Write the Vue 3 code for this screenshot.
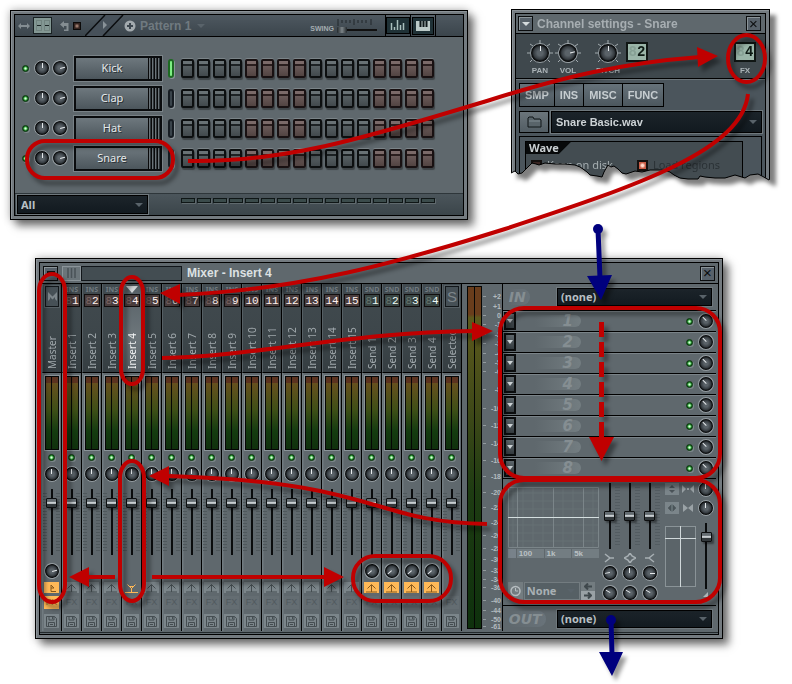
<script setup>
import { reactive, ref } from 'vue'

const channels = reactive(['Kick', 'Clap', 'Hat', 'Snare'].map((name, i) => ({ name, on: true, active: i === 0 })))

const strips = [
  { name: 'Master', kind: 'master' },
  ...Array.from({ length: 15 }, (_, i) => ({ name: `Insert ${i + 1}`, kind: 'ins', no: i + 1, current: i === 3 })),
  ...Array.from({ length: 4 }, (_, i) => ({ name: `Send ${i + 1}`, kind: 'snd', no: i + 1 })),
  { name: 'Selected', kind: 'sel' },
]

const scale = [
  ['+2', 12], ['+1', 22], ['0', 31], ['-1', 40], ['-2', 50], ['-3', 59], ['-4', 69], ['-5', 78], ['-6', 87],
  ['-8', 105], ['-10', 124], ['-12', 141], ['-14', 159], ['-16', 176], ['-18', 192], ['-20', 208], ['-22', 223],
  ['-24', 238], ['-26', 251], ['-28', 264], ['-30', 275], ['-32', 286], ['-34', 295], ['-36', 303], ['-40', 316],
  ['-44', 326], ['-50', 335], ['-61', 342],
]

const bands = [
  { icon: 'M1 1L6 5L1 9M6 5H10', a: '-100deg', b: '-60deg' },
  { icon: 'M6 0L8 3L12 5L8 7L6 10L4 7L0 5L4 3Z', a: '0deg', b: '-60deg' },
  { icon: 'M10 1L5 5L10 9M5 5H1', a: '90deg', b: '-60deg' },
]

const tabs = ['SMP', 'INS', 'MISC', 'FUNC']
const filter = ref('all')
const isSend = (s) => s.kind === 'snd'
const digits = (n) => (n > 9 ? ['', String(n)] : ['8', String(n)])
</script>

<template>
  <main class="desk">
    <section class="win rack" aria-label="Step sequencer">
      <div class="inner">
        <header class="rack-head">
          <svg class="gly arrows" width="12" height="8" viewBox="0 0 12 8"><path d="M0 4L3 1V3H9V1L12 4L9 7V5H3V7Z" /></svg>
          <button class="toggle" aria-label="Step view"><i></i><i></i></button>
          <svg class="gly undo" width="9" height="10" viewBox="0 0 9 10"><path d="M0 3.500L4 0V2H8.500V10H4V8.500H6.500V5H4V7Z" /></svg>
          <i class="lamp"></i>
          <svg class="slashes" width="40" height="21" viewBox="0 0 40 21">
            <path d="M1 21L21 0H38L18 21Z" fill="#47515a" />
            <path d="M0 21L20 0M18 21L38 0" stroke="#0b0d0f" stroke-width="1.500" fill="none" />
            <path d="M18 6L22 10L18 14Z" fill="#899298" />
          </svg>
          <svg class="plus" width="12" height="12" viewBox="0 0 12 12"><circle cx="6" cy="6" r="5.500" fill="#a3aaae" /><path d="M6 3V9M3 6H9" stroke="#3c464e" stroke-width="2" /></svg>
          <button class="pattern">Pattern 1 <i class="caret"></i></button>
          <label class="swing">SWING
            <span>
              <svg width="36" height="9" viewBox="0 0 36 9"><path d="M1 1V8M5 2V5M9 2V5M13 2V5M17 1V7M21 2V5M25 2V5M29 2V5M34 1V7" stroke="#20272b" /></svg>
              <input type="range" value="0" />
            </span>
          </label>
          <button class="view" aria-label="Graph editor"><svg width="16" height="11" viewBox="0 0 16 11"><path d="M1.500 3V10M4.500 7V10M7.500 0V10M10.500 5V10M13.500 3V10" stroke="#a9bfbd" stroke-width="1.500" /></svg></button>
          <button class="view" aria-label="Keyboard editor"><svg width="14" height="12" viewBox="0 0 14 12"><rect y="1" width="14" height="10" fill="#bccac8" /><path d="M4.500 1V7M7.500 1V7M10.500 1V7" stroke="#0d1718" stroke-width="2" /></svg></button>
          <i class="head-end"></i>
        </header>
        <div class="rows">
          <div v-for="c in channels" :key="c.name" class="row">
            <input v-model="c.on" class="led" type="checkbox" :aria-label="c.name + ' on'" />
            <input class="knob" type="range" :aria-label="c.name + ' pan'" />
            <input class="knob right" type="range" :aria-label="c.name + ' volume'" />
            <button class="channel"><span>{{ c.name }}</span></button>
            <i class="pill" :class="{ lit: c.active }"></i>
            <div class="steps">
              <button v-for="n in 16" :key="n" class="step" :class="{ warm: (n - 1) % 8 > 3 }" :aria-label="c.name + ' step ' + n"></button>
            </div>
          </div>
        </div>
        <footer class="rack-foot">
          <span class="select">
            <select v-model="filter" aria-label="Channel filter"><option value="all">All</option></select>
          </span>
          <div class="ticks"><i v-for="n in 16" :key="n"></i></div>
        </footer>
      </div>
    </section>

    <section class="torn" aria-label="Channel settings">
      <div class="win sheet">
        <div class="inner">
          <header class="title">
            <button class="sq" aria-label="Menu"><svg width="10" height="6" viewBox="0 0 10 6"><path d="M1 1H9L5 5Z" fill="#d4dadd" /></svg></button>
            <h2>Channel settings - Snare</h2>
            <button class="sq" aria-label="Close settings">×</button>
          </header>
          <div class="dials">
            <label class="dial">
              <input class="knob big" type="range" /><b>PAN</b>
              <svg class="rays" width="28" height="24" viewBox="0 0 28 24"><path d="M14 0V4M4 4L7 6M24 4L21 6M1 13H4M27 13H24M4 22L6 20M24 22L22 20" /></svg>
            </label>
            <label class="dial">
              <input class="knob big right" type="range" /><b>VOL</b>
              <svg class="rays" width="28" height="24" viewBox="0 0 28 24"><path d="M14 0V4M4 4L7 6M24 4L21 6M1 13H4M27 13H24M4 22L6 20M24 22L22 20" /></svg>
            </label>
            <label class="dial pitch">
              <input class="knob big" type="range" /><b>PITCH</b>
              <svg class="rays" width="28" height="24" viewBox="0 0 28 24"><path d="M14 0V4M4 4L7 6M24 4L21 6M1 13H4M27 13H24M4 22L6 20M24 22L22 20" /></svg>
            </label>
            <span class="lcd"><i>8</i>2</span>
            <div class="fx"><span class="lcd"><i>8</i>4</span><b>FX</b></div>
          </div>
          <div class="lower">
            <nav class="tabs"><button v-for="t in tabs" :key="t">{{ t }}</button></nav>
            <div class="file">
              <button aria-label="Browse"><svg width="15" height="12" viewBox="0 0 15 12"><path d="M1 11V2L2 1H6L7 3H13L14 4V11Z" fill="#59646a" stroke="#111719" /><path d="M2 5H13" stroke="#808b91" /></svg></button>
              <span class="select wide"><select aria-label="Sample"><option>Snare Basic.wav</option></select></span>
            </div>
            <div class="wave-outer">
              <fieldset class="wave">
                <legend>Wave</legend>
                <div class="checks">
                  <label><input type="checkbox" />Keep on disk</label>
                  <label class="dim"><input type="checkbox" checked />Load regions</label>
                </div>
              </fieldset>
            </div>
          </div>
        </div>
      </div>
      <svg class="edge" width="259" height="172" viewBox="0 0 259 172">
        <path d="M0 164L4 162L7 165L11 164L14 161L17 158L21 154L25 155L28 156L34 154L44 155L54 155L64 156L69 158L72 160L76 163L79 166L86 167L91 168L93 163L97 156L100 158L103 157L107 160L111 164L115 165L124 162L131 163L139 161L151 161L159 163L163 166L169 169L177 170L187 170L189 167L194 168L204 169L214 169L224 166L234 169L239 166L247 165L251 167L258 171" />
      </svg>
    </section>

    <section class="win mixer" aria-label="Mixer">
      <div class="inner">
        <header class="title">
          <button class="sq" aria-label="Mixer menu"><svg width="10" height="6" viewBox="0 0 10 6"><path d="M1 2H9" stroke="#111" stroke-width="2" /></svg></button>
          <button class="grip" aria-label="Layout"><svg width="9" height="10" viewBox="0 0 9 10"><path d="M1 0V10M4.500 0V10M8 0V10" stroke="#495257" stroke-width="1.500" /></svg></button>
          <i class="hint"></i>
          <h2>Mixer - Insert 4</h2>
          <button class="sq" aria-label="Close mixer">×</button>
        </header>
        <div class="mix">
          <div class="strips">
            <article v-for="s in strips" :key="s.name" class="strip" :class="{ current: s.current }">
              <div class="cap">
                <template v-if="s.no">
                  <svg v-if="s.current" class="point" width="12" height="8" viewBox="0 0 12 8"><path d="M0 1H12L6 8Z" fill="#d5d9db" /></svg>
                  <b v-else class="kind">{{ isSend(s) ? 'SND' : 'INS' }}</b>
                  <span class="num" :class="{ cool: isSend(s) }"><i>{{ digits(s.no)[0] }}</i>{{ digits(s.no)[1] }}</span>
                </template>
                <span v-else class="badge">
                  <svg v-if="s.kind === 'master'" width="9" height="9" viewBox="0 0 9 9"><path d="M0 9V0L4.500 4.500L9 0V9L7 7V5L4.500 7.500L2 5V7Z" fill="#7d868b" /></svg>
                  <template v-else>S</template>
                </span>
                <span class="name">{{ s.name }}</span>
              </div>
              <div class="meter"><i></i><i></i></div>
              <input class="led" type="checkbox" checked :aria-label="s.name + ' on'" />
              <input class="knob" type="range" :aria-label="s.name + ' pan'" />
              <div class="slot-fader"><input class="fader" type="range" value="84" :aria-label="s.name + ' level'" /></div>
              <div class="aux">
                <input v-if="s.kind === 'master'" class="knob right" type="range" aria-label="Master volume" />
                <input v-else-if="isSend(s)" class="knob low" type="range" :aria-label="s.name + ' amount'" />
              </div>
              <button class="mini send" :class="{ hot: isSend(s) || s.kind === 'master', bare: s.current, none: s.kind === 'sel' }" :aria-label="s.name + ' route'">
                <svg width="15" height="10" viewBox="0 0 15 10">
                  <path v-if="s.current" d="M1 9.500H14M7.500 9V5M3.500 1.500L7.500 5.500L11.500 1.500M6 3.500H9" />
                  <path v-else-if="s.kind === 'master'" d="M7 2V8.500H12M7 2L10 5H7" />
                  <path v-else d="M2 9H13M7.500 9V2M3.500 5.500L7.500 1.500L11.500 5.500" />
                </svg>
              </button>
              <button class="mini fxb" :class="{ hot: s.kind === 'master' }">FX</button>
              <button class="mini disk" :aria-label="'Save ' + s.name">
                <svg width="11" height="11" viewBox="0 0 11 11"><path d="M.5.5H8.500L10.500 2.500V10.500H.5ZM3 .5V4H8V.5M6.500 1V3M2.500 10.500V6.500H8.500V10.500M4 8.500H7" /></svg>
              </button>
            </article>
          </div>
          <div class="main-meter"><i></i><i></i></div>
          <svg class="scale" width="19" height="347" viewBox="0 0 19 347">
            <g v-for="[t, y] in scale" :key="t">
              <path :d="`M0 ${y}.5H3`" stroke="#929a9e" />
              <text x="18" :y="y + 3" text-anchor="end">{{ t }}</text>
            </g>
          </svg>
          <div class="panel">
            <div class="io">
              <em>IN</em>
              <span class="select"><select aria-label="Input"><option>(none)</option></select></span>
            </div>
            <div v-for="n in 8" :key="n" class="slot">
              <button class="drop" :aria-label="'Effect slot ' + n"><svg width="6" height="4" viewBox="0 0 6 4"><path d="M0 0H6L3 4Z" fill="#cdd3d6" /></svg></button>
              <em>{{ n }}</em>
              <input class="led" type="checkbox" checked :aria-label="'Slot ' + n + ' on'" />
              <input class="knob mix-knob" type="range" :aria-label="'Slot ' + n + ' mix'" />
            </div>
            <div class="eq">
              <div class="eq-left">
                <svg class="graph" width="91" height="61" viewBox="0 0 91 61">
                  <path d="M5 0V61M15 0V61M25 0V61M35 0V61M55 0V61M65 0V61M85 0V61M0 6H91M0 14H91M0 22H91M0 38H91M0 46H91M0 54H91" stroke="#667075" />
                  <path d="M9.500 0V61M45.500 0V61M75.500 0V61M.5 .5H90.500V60.500H.5Z" stroke="#7b8589" fill="none" />
                  <path d="M0 30.500H91" stroke="#d5dfe0" />
                </svg>
                <div class="freq"><i></i><span>100</span><span>1k</span><span>5k</span></div>
                <div class="preset">
                  <svg width="15" height="18" viewBox="0 0 15 18"><rect width="15" height="18" fill="#737c80" /><circle cx="7.500" cy="9" r="4.500" fill="none" stroke="#b7bec1" stroke-width="1.500" /><path d="M7.500 6V9H10" fill="none" stroke="#b7bec1" /></svg>
                  <span class="select flat"><select aria-label="Delay preset"><option>None</option></select></span>
                  <span class="nudge">
                    <button aria-label="Previous"><svg width="8" height="7" viewBox="0 0 8 7"><path d="M8 3.500H1M4 .5L1 3.500L4 6.500" /></svg></button>
                    <button class="lit" aria-label="Next"><svg width="8" height="7" viewBox="0 0 8 7"><path d="M0 3.500H7M4 .5L7 3.500L4 6.500" /></svg></button>
                  </span>
                </div>
              </div>
              <div v-for="(b, i) in bands" :key="i" class="band">
                <input class="fader" type="range" value="50" :aria-label="'Band ' + (i + 1)" />
                <svg width="12" height="10" viewBox="0 0 12 10"><path :d="b.icon" fill="none" stroke="#a7afb3" stroke-width="1.500" /></svg>
                <input class="knob" type="range" :style="{ '--a': b.a }" :aria-label="'Frequency ' + (i + 1)" />
                <input class="knob" type="range" :style="{ '--a': b.b }" :aria-label="'Width ' + (i + 1)" />
              </div>
              <div class="stereo">
                <div class="pair">
                  <button class="tool" aria-label="Invert phase"><svg width="8" height="8" viewBox="0 0 8 8"><path d="M1 3L4 0L7 3ZM1 5L4 8L7 5Z" fill="#4b5459" /></svg></button>
                  <svg width="12" height="8" viewBox="0 0 12 8"><path d="M0 0L4 4L0 8ZM12 0L8 4L12 8ZM5 3H7V5H5Z" fill="#9aa2a6" /></svg>
                  <input class="knob" type="range" aria-label="Separation" />
                </div>
                <div class="pair">
                  <button class="tool" aria-label="Swap channels"><svg width="8" height="8" viewBox="0 0 8 8"><path d="M3 1L0 4L3 7ZM5 1L8 4L5 7ZM4 0V8" fill="#4b5459" stroke="#4b5459" stroke-width=".5" /></svg></button>
                  <svg width="12" height="8" viewBox="0 0 12 8"><path d="M1 0L6 4L1 8ZM11 0L6 4L11 8Z" fill="#9aa2a6" /></svg>
                  <input class="knob" type="range" aria-label="Pan" />
                </div>
                <div class="xy-row">
                  <svg width="31" height="61" viewBox="0 0 31 61"><rect x=".5" y=".5" width="30" height="60" fill="#5b6469" stroke="#8a9397" /><path d="M0 12.500H31M15.500 0V61" stroke="#d0d8da" /></svg>
                  <input class="fader" type="range" value="84" aria-label="Level" />
                </div>
                <svg class="wedge" width="5" height="5" viewBox="0 0 5 5"><path d="M5 0V5H0Z" fill="#adb5b8" /></svg>
              </div>
            </div>
            <div class="io out">
              <em>OUT</em>
              <span class="select"><select aria-label="Output"><option>(none)</option></select></span>
            </div>
          </div>
        </div>
      </div>
    </section>

    <svg class="notes" width="792" height="684" viewBox="0 0 792 684" aria-hidden="true">
      <g class="line red">
        <rect x="27" y="141" width="146" height="37" rx="18" />
        <path d="M188 161C290 163 380 133 490 100C560 78 620 63 700 57" />
        <ellipse cx="746.500" cy="58.500" rx="18.500" ry="23.500" />
        <path d="M748 94C742 150 640 185 505 229C400 262 300 290 178 295" />
        <rect x="39" y="274" width="26" height="328" rx="13" ry="17" />
        <rect x="121" y="277" width="22" height="107" rx="11" ry="15" />
        <rect x="120" y="461" width="24" height="140" rx="12" ry="17" />
        <path d="M162 358C260 356 350 332 474 331" />
        <path d="M487 524C370 522 380 482 168 476" />
        <path d="M115 577H86M152 577H326" />
        <rect x="353" y="556" width="98" height="45" rx="22" />
        <rect x="500" y="308" width="220" height="170" rx="24" />
        <rect x="500" y="480" width="220" height="122" rx="24" />
        <path d="M601.500 322V438" stroke-width="5" stroke-dasharray="15 5" />
      </g>
      <g fill="#c00000">
        <path d="M697 47L718 56L698 67ZM160 293L180 284V304ZM493 331L472 322V341ZM149 476L169 466V486ZM69 577L89 567V587ZM344 577L324 567V587ZM589 437H614L601.500 461Z" />
      </g>
      <g class="blue">
        <circle cx="598" cy="229" r="5" /><path d="M598 229L600 278M611 620L612 654" /><circle cx="611" cy="620" r="5" />
        <path class="tip" d="M587 276L612 275L601 300ZM599 652H623L612 676Z" />
      </g>
    </svg>
  </main>
</template>

<style>
body { background: #fff; }
</style>

<style scoped>
* { box-sizing: border-box; }
.desk { position: relative; min-height: 684px; overflow: hidden; font: 11px/14px "Noto Sans", "Liberation Sans", sans-serif; color: #c9cfd2; }
i { font-style: normal; }
h2 { margin: 0; font: bold 12px/16px "Liberation Sans", sans-serif; }
button { font: inherit; color: inherit; border: 0; padding: 0; margin: 0; background: none; display: flex; align-items: center; justify-content: center; }
input { margin: 0; }
svg { flex: none; display: block; }

.win { padding: 3px; border: 1px solid #000; background: #747b80; box-shadow: inset 1px 1px #8b9297, 6px 6px 8px rgba(0, 0, 0, .5), 0 0 8px rgba(0, 0, 0, .3); }
.inner { border: 1px solid #000; background: #5f686d; }
.rack { position: absolute; left: 10px; top: 10px; width: 458px; }
.torn { position: absolute; left: 511px; top: 9px; width: 259px; filter: drop-shadow(6px 6px 2px rgba(0, 0, 0, .5)); }
.mixer { position: absolute; left: 35px; top: 258px; width: 688px; }

/* knobs, leds and faders */
.knob { --a: 0deg; appearance: none; flex: none; width: 16px; height: 16px; border-radius: 50%; border: 1px solid #959da2; transform: rotate(var(--a)); background: linear-gradient(#e6eaec, #e6eaec) center 2px / 1px 5px no-repeat, radial-gradient(circle closest-side, #5a6268 0 30%, #353b40 70%, #0b0d0e 90%); }
.knob::-webkit-slider-thumb { appearance: none; width: 1px; height: 1px; opacity: 0; }
.knob.right { --a: 75deg; }
.knob.low { --a: -130deg; }
.knob.mix-knob { --a: -45deg; }
.knob.big { width: 20px; height: 20px; }
.led { appearance: none; flex: none; width: 7px; height: 7px; border-radius: 50%; border: 1px solid #0b3b0e; background: radial-gradient(circle, #e2ffe0 0 15%, #3cb748 45%, #0d3f12 75%); box-shadow: 1px 1px #7d898b; }
.fader { appearance: none; writing-mode: vertical-lr; direction: rtl; width: 12px; height: 66px; background: linear-gradient(#0a0c0d, #0a0c0d) center / 2px 100% no-repeat; }
.fader::-webkit-slider-thumb { appearance: none; width: 11px; height: 10px; border: 1px solid #0d0f10; border-radius: 1px; background: linear-gradient(#646c71 0 30%, #c8ced1 40% 55%, #32383b 65%); box-shadow: 2px 2px 2px rgba(0, 0, 0, .4); }

/* drop-downs */
.select { position: relative; display: flex; border: 1px solid #000; outline: 1px solid #6f787d; background: linear-gradient(#1c242a, #121a20); }
.select::after, .caret { content: ""; border: 4px solid transparent; border-top-color: #59636a; border-bottom: 0; }
.select::after { position: absolute; right: 4px; top: 50%; margin-top: -2px; pointer-events: none; }
.select select { appearance: none; flex: 1; min-width: 0; height: 16px; border: 0; margin: 0; padding: 0 3px; background: none; color: #b9c0c4; font: bold 11px/16px "Noto Sans", sans-serif; }

/* step sequencer */
.rack-head { display: flex; align-items: center; height: 22px; border-bottom: 1px solid #000; background: linear-gradient(#4e5860, #3b454c); }
.gly { fill: #848d92; }
.arrows { margin: 0 3px 0 3px; }
.toggle { width: 19px; height: 17px; gap: 2px; border: 1px solid #1a2224; background: #839793; }
.toggle i { width: 6px; height: 11px; border: 1px solid #71837f; background: linear-gradient(#1a2424, #1a2424) center / 100% 1px no-repeat; }
.undo { margin: 0 4px 0 8px; }
.lamp { width: 8px; height: 8px; border: 1px solid #0c0a09; background: radial-gradient(circle, #c09a8a, #35241f 60%); }
.slashes { margin-left: 4px; }
.plus { margin: 0 4px 0 -1px; }
.pattern { gap: 6px; color: #707a80; font: bold 12px/16px "Liberation Sans", sans-serif; }
.swing { display: flex; align-items: flex-end; gap: 3px; margin-left: auto; font: bold 7px/9px "Liberation Sans", sans-serif; color: #a5adb1; }
.swing span { display: flex; flex-direction: column; }
.swing input { appearance: none; width: 40px; height: 6px; background: linear-gradient(#111, #111) center / 100% 2px no-repeat; }
.swing input::-webkit-slider-thumb { appearance: none; width: 10px; height: 6px; border-radius: 1px; background: linear-gradient(90deg, #22282b, #7d8589, #22282b); }
.view { width: 25px; height: 21px; border-left: 1px solid #000; background: linear-gradient(#59636b, #3b454c); }
.view svg { box-sizing: content-box; padding: 2px 3px; border: 1px solid #000; background: #1f3136; }
.swing + .view { margin-left: 8px; }
.head-end { width: 28px; height: 21px; border-left: 1px solid #000; }
.rows { padding: 16px 0 20px; }
.row { display: flex; align-items: center; height: 30px; padding-left: 7px; }
.row .knob { margin-left: 4px; }
.row .led { margin-right: 1px; }
.row .knob + .knob { margin-left: 2px; }
.channel { width: 88px; height: 25px; margin-left: 6px; border: 2px solid #0a0c0e; outline: 1px solid #798287; outline-offset: 0; background: repeating-linear-gradient(90deg, #09090a 0 1px, #6b7378 1px 2px, #2f363a 2px 3px) right / 12px 100% no-repeat, linear-gradient(#6e787e, #4c565c); }
.channel span { flex: 1; margin-right: 12px; color: #e4e8ea; text-shadow: 1px 1px #2c3337; }
.pill { width: 6px; height: 19px; margin-left: 6px; border: 2px solid #161c22; border-radius: 3px; background: #3a444b; box-shadow: 1px 1px #8b9499; }
.pill.lit { border-color: #1d6a22; background: #7ff084; }
.steps { display: flex; gap: 3px; margin-left: 7px; }
.step { width: 13px; height: 19px; border: 2px solid #0c0f10; border-radius: 2px; box-shadow: 0 -1px #7b8488, 1px 2px 1px rgba(0, 0, 0, .35); background: linear-gradient(#697275 0 3px, #1d2224 3px 5px, #576063 5px, #42494d); }
.step.warm { border-color: #191112; background: linear-gradient(#7b6a69 0 3px, #2a1e1e 3px 5px, #6a5a59 5px, #524442); }
.rack-foot { display: flex; align-items: flex-start; justify-content: space-between; border-top: 1px solid #2e363a; padding: 1px 28px 1px 2px; height: 22px; background: linear-gradient(#4b555b, #3b454a); }
.rack-foot .select { width: 131px; }
.rack-foot .select select { height: 17px; }
.ticks { display: flex; gap: 2px; margin-top: 3px; }
.ticks i { width: 14px; height: 5px; border: 1px solid #0f1616; box-shadow: 1px 1px #5f696d; background: #3b4b4b; }

/* channel settings */
.torn .sheet { height: 172px; overflow: hidden; box-shadow: inset 1px 1px #8b9297; clip-path: polygon(0 0, 100% 0, 100% 171px, 251px 167px, 247px 165px, 239px 166px, 234px 169px, 224px 166px, 214px 169px, 204px 169px, 194px 168px, 189px 167px, 187px 170px, 177px 170px, 169px 169px, 163px 166px, 159px 163px, 151px 161px, 139px 161px, 131px 163px, 124px 162px, 115px 165px, 111px 164px, 107px 160px, 103px 157px, 100px 158px, 97px 156px, 93px 163px, 91px 168px, 86px 167px, 79px 166px, 76px 163px, 72px 160px, 69px 158px, 64px 156px, 54px 155px, 44px 155px, 34px 154px, 28px 156px, 25px 155px, 21px 154px, 17px 158px, 14px 161px, 11px 164px, 7px 165px, 4px 162px, 0 164px); }
.edge { position: absolute; left: 0; top: 0; fill: none; stroke: #000; }
.title { display: flex; align-items: center; height: 20px; border-bottom: 1px solid #000; padding: 0 4px 0 2px; background: #5f686d; }
.title h2 { margin: 0 auto 0 4px; color: #a7aeb2; }
.mixer .title h2 { color: #dde1e3; }
.sq { width: 15px; height: 15px; border: 1px solid #0b0d0e; box-shadow: inset 1px 1px #8b9499; background: #57616a; color: #0b0d0e; font: 15px/12px "Liberation Sans", sans-serif; }
.dials { display: flex; align-items: flex-start; height: 45px; padding: 8px 9px 0 10px; background: #3f484d; border-bottom: 1px solid #000; }
.dial { position: relative; display: flex; flex-direction: column; align-items: center; width: 28px; gap: 4px; padding-top: 1px; }
.dial.pitch { margin-left: 12px; }
.rays { position: absolute; left: 0; top: -2px; stroke: #a3abaf; pointer-events: none; }
.dials b { font: bold 8px/8px "Liberation Sans", sans-serif; color: #abb3b7; }
.lcd { display: flex; justify-content: center; align-items: center; width: 22px; height: 20px; border: 2px solid #101614; background: #9ab5a8; color: #0d1a14; font: bold 14px/16px "Liberation Mono", monospace; }
.lcd i { color: #86a094; }
.dials > .lcd { margin-left: 4px; }
.fx { display: flex; flex-direction: column; align-items: center; gap: 5px; margin-left: auto; }
.lower { padding: 2px 3px; background: #4b555c; border-top: 1px solid #6d767b; }
.tabs { display: flex; width: max-content; border: 1px solid #000; background: #000; gap: 1px; margin-top: 1px; }
.tabs button { height: 22px; padding: 0 5px; background: linear-gradient(#66727a, #4c575e); color: #c6cdd0; font: bold 11px/14px "Liberation Sans", sans-serif; }
.file { display: flex; gap: 2px; margin-top: 4px; }
.file button { width: 30px; height: 22px; border: 1px solid #000; background: linear-gradient(#6b757b, #525d64); }
.file .select { flex: 1; align-items: center; outline-offset: 0; }
.file .select select { font: bold 11px/16px "Liberation Sans", sans-serif; color: #cdd3d6; padding-left: 4px; }
.wave-outer { margin-top: 3px; padding: 4px 18px 0 5px; border: 1px solid #000; border-bottom: 0; background: #4b555c; }
.wave { min-width: 0; margin: 0; padding: 0; height: 50px; border: 1px solid #000; background: #434c51; }
.wave legend { float: left; padding: 0 12px 0 3px; font-weight: bold; line-height: 12px; color: #c9cfd2; background: #07090a; clip-path: polygon(0 0, 100% 0, calc(100% - 12px) 100%, 0 100%); }
.checks { clear: both; display: flex; gap: 24px; padding: 4px 0 0 5px; }
.checks label { display: flex; align-items: center; gap: 5px; color: #a5adb0; }
.checks .dim { color: #2b3236; }
.checks input { appearance: none; width: 11px; height: 11px; border: 2px solid #14100f; background: #3a2522; }
.checks input:checked { background: radial-gradient(circle, #ffd9cc 0 20%, #c75b45 60%); }

/* mixer */
.mixer .inner { padding-bottom: 1px; }
.mixer .title { height: 21px; padding: 0 3px 0 3px; }
.mixer .title h2 { margin-left: 5px; }
.grip { width: 19px; height: 15px; margin-left: 4px; border: 1px solid #8b9499; background: #6b757a; }
.hint { width: 101px; height: 15px; border: 1px solid #11161a; background: #434d52; }
.mix { display: flex; padding: 0 2px 1px 2px; border-bottom: 1px solid #22282b; }
.strips { display: flex; }
.strip { display: flex; flex-direction: column; align-items: center; width: 20px; border-right: 1px solid #000; background: linear-gradient(90deg, #717b80 1px, #5f686d 2px); }
.cap { display: flex; flex-direction: column; align-items: center; align-self: stretch; height: 89px; padding: 1px 0 3px; border-bottom: 1px solid #000; border-left: 1px solid #565f64; background: linear-gradient(#414a4f, #3d464a 60%, #353d41); }
.current .cap { background: linear-gradient(#555f65, #6d767b 60%, #5a6369); }
.kind { font: bold 7px/9px "Noto Sans", sans-serif; color: #707a80; }
.point { margin-bottom: 1px; }
.num { display: flex; justify-content: center; width: 16px; height: 13px; border: 1px solid #120e0e; background: #4a3d3d; color: #fff0ee; font: 11px/12px "Liberation Mono", monospace; }
.num i { color: #7a6665; }
.num.cool { background: #394543; color: #eefaf6; }
.num.cool i { color: #64756f; }
.badge { display: flex; align-items: center; justify-content: center; width: 14px; height: 21px; margin-top: 1px; border: 1px solid #12171a; outline: 1px solid #565f64; background: #465056; color: #7d868b; font: 15px/18px "Liberation Sans", sans-serif; }
.name { flex: 1; writing-mode: vertical-rl; transform: rotate(180deg); font-size: 10px; line-height: 13px; color: #a0a8ac; white-space: nowrap; }
.current .name { color: #f2f4f5; }
.meter { display: flex; gap: 1px; width: 16px; height: 76px; margin-top: 2px; padding: 1px; border: 1px solid #899297; background: #050605; }
.meter i, .main-meter i { flex: 1; background: linear-gradient(#5c3320 0 8%, #66501e 9%, #3f4f17 45%, #143c10 75%, #0f300d); }
.strip > .led { margin: 3px 0 2px; }
.strip > .knob { margin: 3px 0 2px; }
.slot-fader { display: flex; align-items: flex-start; justify-content: center; width: 17px; height: 79px; padding-top: 5px; background: repeating-linear-gradient(#4f585c 0 1px, transparent 1px 3px) left 9px / 4px 60px no-repeat, repeating-linear-gradient(#4f585c 0 1px, transparent 1px 3px) right 9px / 4px 60px no-repeat; }
.aux { height: 19px; }
.mini { width: 15px; background: #7b858a; color: #4e575c; }
.mini svg { fill: none; stroke: #454d51; }
.send { height: 11px; }
.fxb { height: 13px; margin-top: 3px; background: #646d72; color: #50595e; font: 9px/13px "Liberation Sans", sans-serif; }
.disk { height: 14px; margin: 5px 0 3px; }
.mini.hot { background: #ffb957; color: #a46f28; }
.hot svg { stroke: #85581c; }
.send.bare { background: none; }
.bare svg { stroke: #ffb957; }
.send.none { visibility: hidden; }
.main-meter { display: flex; gap: 1px; width: 15px; margin: 2px 1px 2px 5px; padding: 1px; background: #050605; }
.main-meter i { background: linear-gradient(#693d1c 0 8%, #5d5a1d 9%, #414a18 35%, #1e3c12 60%, #0e310d); }
.scale { margin: 0 auto 0 0; }
.scale text { fill: #b4bbbf; font: bold 7px "Liberation Sans", sans-serif; }
.panel { width: 217px; border-left: 1px solid #000; }
.io { display: flex; align-items: center; justify-content: space-between; height: 27px; padding: 0 4px 0 6px; border-bottom: 1px solid #000; }
.io .select { width: 155px; }
.panel em { font: italic bold 15px/16px "DejaVu Sans", sans-serif; color: #858e92; background: linear-gradient(90deg, transparent, #737d81); border-radius: 0 8px 8px 0; }
.io em { font-size: 14px; padding-right: 4px; background: linear-gradient(90deg, transparent, #69737a); }
.io.out em { margin-right: -6px; }
.slot { display: flex; align-items: center; height: 21px; padding: 0 2px 0 1px; border-bottom: 1px solid #000; box-shadow: inset 0 1px #7a8388; }
.slot em { width: 46px; height: 12px; margin: 0 auto 0 19px; padding-right: 8px; line-height: 12px; text-align: right; }
.slot .knob { margin-left: 5px; }
.drop { width: 12px; height: 18px; border: 2px solid #0b0d0e; background: linear-gradient(#5e676c, #333a3e); }
.eq { display: flex; padding: 2px 2px 0 5px; height: 127px; border-bottom: 1px solid #000; }
.eq-left { display: flex; flex-direction: column; width: 92px; padding-top: 6px; }
.freq { display: flex; gap: 1px; margin-top: 1px; width: 91px; font: bold 8px/9px "Liberation Sans", sans-serif; color: #bac1c4; }
.freq i { width: 8px; background: #78828a; }
.freq span { flex: 1; padding-left: 2px; background: #737d82; }
.preset { display: flex; align-items: center; gap: 1px; margin: auto 0 5px; width: 87px; }
.select.flat { flex: 1; border-color: #737c80; outline: 0; background: #566065; }
.select.flat select { color: #a9b1b5; padding: 0 2px; }
.nudge { display: flex; flex-direction: column; }
.nudge button { width: 14px; height: 9px; background: #737c80; }
.nudge svg { fill: none; stroke: #3f484c; stroke-width: 2; }
.nudge .lit { background: #99a1a5; }
.band { display: flex; flex-direction: column; align-items: center; width: 20px; padding-top: 2px; background: repeating-linear-gradient(#535c61 0 1px, transparent 1px 3px) right 6px / 5px 58px no-repeat; }
.band svg { margin: 4px 0 2px; }
.band .knob + .knob { margin-top: 4px; }
.stereo { flex: 1; display: flex; flex-direction: column; gap: 3px; padding-left: 5px; min-width: 0; }
.pair { display: flex; align-items: center; justify-content: space-between; }
.tool { width: 14px; height: 12px; background: #7b858a; }
.xy-row { display: flex; justify-content: space-between; align-items: center; padding-right: 2px; margin-top: 4px; }
.wedge { margin-left: auto; margin-right: 6px; }
.io.out { border-bottom: 0; height: 25px; }

/* pointers drawn over the windows */
.notes { position: absolute; left: 0; top: 0; pointer-events: none; filter: drop-shadow(4px 5px 2px rgba(0, 0, 0, .4)); }
.line { fill: none; stroke: #c00000; stroke-width: 4; }
.blue { fill: #00007e; stroke: #00007e; stroke-width: 5; }
.blue circle, .tip { stroke: none; }
</style>
